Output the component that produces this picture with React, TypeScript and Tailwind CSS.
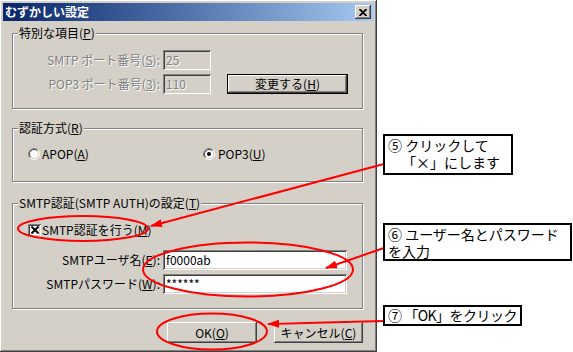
import React from 'react';

const sunken =
  'shadow-[inset_1px_1px_#808080,inset_-1px_-1px_#ffffff,inset_2px_2px_#404040,inset_-2px_-2px_#d4d0c8]';
const raised =
  'shadow-[inset_-1px_-1px_#404040,inset_1px_1px_#ffffff,inset_-2px_-2px_#808080,inset_2px_2px_#d4d0c8]';
const etched = 'border border-[#808080] shadow-[inset_1px_1px_#ffffff,1px_1px_#ffffff]';
const disabledText = 'text-[#808080] [text-shadow:1px_1px_0_#ffffff]';

const GroupBox: React.FC<{ label: React.ReactNode; className: string; children: React.ReactNode }> = ({
  label,
  className,
  children,
}) => (
  <div className={`relative ${etched} ${className}`}>
    <span className="absolute left-[5px] top-[-8px] bg-[#d4d0c8] px-[1px] leading-[14px] whitespace-nowrap">
      {label}
    </span>
    {children}
  </div>
);

const Radio: React.FC<{ checked?: boolean }> = ({ checked }) => (
  <svg width="12" height="12" viewBox="0 0 12 12" className="shrink-0">
    <circle cx="6" cy="6" r="5" fill="#ffffff" />
    <path d="M2.11 9.89 A5.5 5.5 0 0 1 9.89 2.11" fill="none" stroke="#808080" strokeWidth="1" />
    <path d="M9.89 2.11 A5.5 5.5 0 0 1 2.11 9.89" fill="none" stroke="#ffffff" strokeWidth="1" />
    <path d="M2.82 9.18 A4.5 4.5 0 0 1 9.18 2.82" fill="none" stroke="#404040" strokeWidth="1" />
    <path d="M9.18 2.82 A4.5 4.5 0 0 1 2.82 9.18" fill="none" stroke="#d4d0c8" strokeWidth="1" />
    {checked && <circle cx="6" cy="6" r="2" fill="#000000" />}
  </svg>
);

export default function App() {
  return (
    <div className="relative flex h-[352px] w-[573px] overflow-hidden bg-white font-['Noto_Sans_CJK_JP','Noto_Sans',sans-serif] text-[12px] leading-[14px] text-black">
      {/* dialog */}
      <div className={`flex h-[352px] w-[377px] shrink-0 flex-col bg-[#d4d0c8] p-[3px] ${raised}`}>
        {/* title bar */}
        <div className="flex h-[18px] items-center bg-gradient-to-r from-[#0a246a] to-[#a6caf0] pl-[2px] pr-[3px]">
          <span className="text-[12px] font-bold text-white">むずかしい設定</span>
          <div className={`ml-auto flex h-[14px] w-[16px] items-center justify-center bg-[#d4d0c8] ${raised}`}>
            <svg width="8" height="7" viewBox="0 0 8 7">
              <path d="M0.5 0 L7.5 7 M7.5 0 L0.5 7" stroke="#000" strokeWidth="1.8" />
            </svg>
          </div>
        </div>

        {/* special items */}
        <GroupBox
          label={<>特別な項目(<u>P</u>)</>}
          className="ml-[9px] mt-[12px] h-[76px] w-[351px] pt-[16px]"
        >
          <div className="flex h-[20px] items-center">
            <span className={`w-[147px] text-right ${disabledText}`}>
              SMTP ポート番号(<u>S</u>):
            </span>
            <div className={`ml-[3px] flex h-[20px] w-[48px] items-center bg-[#d4d0c8] pl-[3px] ${sunken} ${disabledText}`}>
              25
            </div>
          </div>
          <div className="mt-[4px] flex h-[20px] items-center">
            <span className={`w-[147px] text-right ${disabledText}`}>
              POP3 ポート番号(<u>3</u>):
            </span>
            <div className={`ml-[3px] flex h-[20px] w-[48px] items-center bg-[#d4d0c8] pl-[3px] ${sunken} ${disabledText}`}>
              110
            </div>
            <div className={`ml-[16px] flex h-[20px] w-[121px] items-center justify-center border border-black bg-[#d4d0c8] ${raised}`}>
              変更する(<u>H</u>)
            </div>
          </div>
        </GroupBox>

        {/* auth method */}
        <GroupBox
          label={<>認証方式(<u>R</u>)</>}
          className="ml-[9px] mt-[19px] h-[54px] w-[351px] pt-[18px]"
        >
          <div className="flex h-[14px] items-center pl-[15px]">
            <div className="flex w-[175px] items-center gap-[2px]">
              <Radio />
              <span>
                APOP(<u>A</u>)
              </span>
            </div>
            <div className="flex items-center gap-[3px]">
              <Radio checked />
              <span>
                POP3(<u>U</u>)
              </span>
            </div>
          </div>
        </GroupBox>

        {/* smtp auth */}
        <GroupBox
          label={<>SMTP認証(SMTP AUTH)の設定(<u>T</u>)</>}
          className="ml-[9px] mt-[21px] h-[106px] w-[351px] pt-[19px]"
        >
          <div className="flex h-[14px] items-center gap-[1px] pl-[15px]">
            <div className={`flex h-[13px] w-[13px] items-center justify-center bg-white ${sunken}`}>
              <svg width="8" height="8" viewBox="0 0 8 8">
                <path d="M0.5 0.5 L7.5 7.5 M7.5 0.5 L0.5 7.5" stroke="#000" strokeWidth="2" />
              </svg>
            </div>
            <span>
              SMTP認証を行う(<u>M</u>)
            </span>
          </div>
          <div className="mt-[13px] flex h-[20px] items-center">
            <span className="w-[147px] text-right">
              SMTPユーザ名(<u>E</u>):
            </span>
            <div className={`ml-[3px] flex h-[20px] w-[184px] items-center bg-white pl-[3px] ${sunken}`}>
              f0000ab
            </div>
          </div>
          <div className="mt-[4px] flex h-[20px] items-center">
            <span className="w-[147px] text-right">
              SMTPパスワード(<u>W</u>):
            </span>
            <div className={`ml-[3px] flex h-[20px] w-[184px] items-center bg-white pl-[3px] ${sunken}`}>
              ******
            </div>
          </div>
        </GroupBox>

        {/* buttons */}
        <div className="ml-[164px] mt-[13px] flex">
          <div className={`flex h-[21px] w-[90px] items-center justify-center bg-[#d4d0c8] ${raised}`}>
            OK(<u>O</u>)
          </div>
          <div className={`ml-[17px] flex h-[21px] w-[89px] items-center justify-center bg-[#d4d0c8] ${raised}`}>
            キャンセル(<u>C</u>)
          </div>
        </div>
      </div>

      {/* annotations */}
      <svg className="pointer-events-none absolute inset-0" width="573" height="352" viewBox="0 0 573 352">
        <defs>
          <marker
            id="arrow"
            viewBox="0 0 12 8"
            refX="11"
            refY="4"
            markerWidth="12"
            markerHeight="8"
            markerUnits="userSpaceOnUse"
            orient="auto"
          >
            <path d="M0 0 L12 4 L0 8 z" fill="#ff0000" />
          </marker>
        </defs>
        <g fill="none" stroke="#ff0000" strokeWidth="2">
          <ellipse cx="83" cy="228.5" rx="65" ry="12.5" />
          <ellipse cx="248" cy="269.5" rx="105" ry="27" />
          <ellipse cx="212" cy="331.5" rx="55" ry="18" />
          <line x1="384" y1="164" x2="151" y2="226" markerEnd="url(#arrow)" />
          <line x1="384" y1="248" x2="326" y2="268" markerEnd="url(#arrow)" />
          <line x1="384" y1="321" x2="268" y2="324" markerEnd="url(#arrow)" />
        </g>
      </svg>

      <div className="absolute left-[383px] top-[134px] h-[41px] w-[130px] whitespace-nowrap border-2 border-black bg-white pl-[3px] pt-[1px] text-[14px] leading-[17px]">
        <div>⑤ クリックして</div>
        <div className="pl-[14px]">「×」にします</div>
      </div>
      <div className="absolute left-[383px] top-[223px] h-[38px] w-[189px] whitespace-nowrap border-2 border-black bg-white pl-[3px] pt-[1px] text-[14px] leading-[17px]">
        <div>⑥ ユーザー名とパスワード</div>
        <div>を入力</div>
      </div>
      <div className="absolute left-[383px] top-[305px] flex h-[21px] w-[139px] items-center whitespace-nowrap border-2 border-black bg-white pl-[3px] text-[14px] leading-[15px] tracking-[-0.5px]">
        ⑦ 「OK」をクリック
      </div>
    </div>
  );
}
